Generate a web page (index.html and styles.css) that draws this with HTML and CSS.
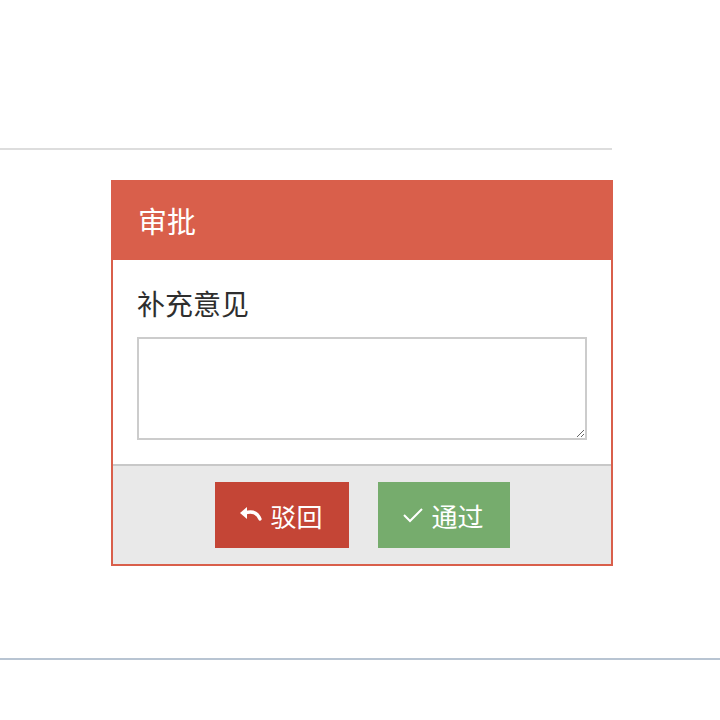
FILE: index.html
```html
<!DOCTYPE html>
<html lang="zh-CN">
<head>
<meta charset="utf-8">
<link rel="stylesheet" href="styles.css">
</head>
<body>
<div class="top"></div>
<div class="panel">
  <div class="panel-head">审批</div>
  <div class="panel-body">
    <label class="label">补充意见</label>
    <textarea class="comment"></textarea>
  </div>
  <div class="panel-foot">
    <button class="btn btn-reject">
      <svg class="ico" width="22" height="16" viewBox="0 0 22 16"><path d="M0 6 L7 0 L7 12 Z" fill="#fff"/><path d="M5 6 C11 4 17 5 20 12" stroke="#fff" stroke-width="3.2" fill="none" stroke-linecap="round"/></svg>
      <span>驳回</span>
    </button>
    <button class="btn btn-pass">
      <svg class="ico" width="20" height="16" viewBox="0 0 20 16"><path d="M1 8 L7 14 L19 2" stroke="#fff" stroke-width="2" fill="none"/></svg>
      <span>通过</span>
    </button>
  </div>
</div>
<div class="bottom"></div>
</body>
</html>
```

FILE: styles.css
```css
html, body {
  margin: 0;
  padding: 0;
  background: #fff;
  font-family: "Noto Sans CJK SC", "Noto Sans", sans-serif;
}
.top {
  width: 612px;
  height: 148px;
  border-bottom: 2px solid #dddddd;
}
.panel {
  margin: 30px 0 0 111px;
  width: 502px;
  box-sizing: border-box;
  border: 2px solid #d95f4b;
  border-top: none;
}
.panel-head {
  height: 80px;
  margin: 0 -2px;
  background: #d95f4b;
  color: #fff;
  font-size: 29px;
  line-height: 80px;
  padding-left: 27px;
}
.panel-body {
  padding: 24px;
}
.label {
  display: block;
  font-size: 28px;
  line-height: 38px;
  color: #2e2e2e;
  margin-bottom: 15px;
}
.comment {
  display: block;
  width: 450px;
  height: 103px;
  box-sizing: border-box;
  border: 2px solid #cccccc;
  margin: 0;
  resize: vertical;
}
.panel-foot {
  border-top: 2px solid #c8c8c8;
  background: #e9e9e9;
  padding: 16px 0;
  display: flex;
  justify-content: center;
  gap: 29px;
}
.btn {
  height: 66px;
  border: none;
  color: #fff;
  font-family: "Noto Sans CJK SC", "Noto Sans", sans-serif;
  font-size: 26px;
  display: flex;
  align-items: center;
  justify-content: center;
  gap: 8px;
  padding: 0;
}
.btn-reject {
  width: 134px;
  background: #c44536;
}
.btn-pass {
  width: 132px;
  background: #76ac6d;
}
.bottom {
  margin-top: 92px;
  height: 2px;
  background: #b8c4d2;
}
```
